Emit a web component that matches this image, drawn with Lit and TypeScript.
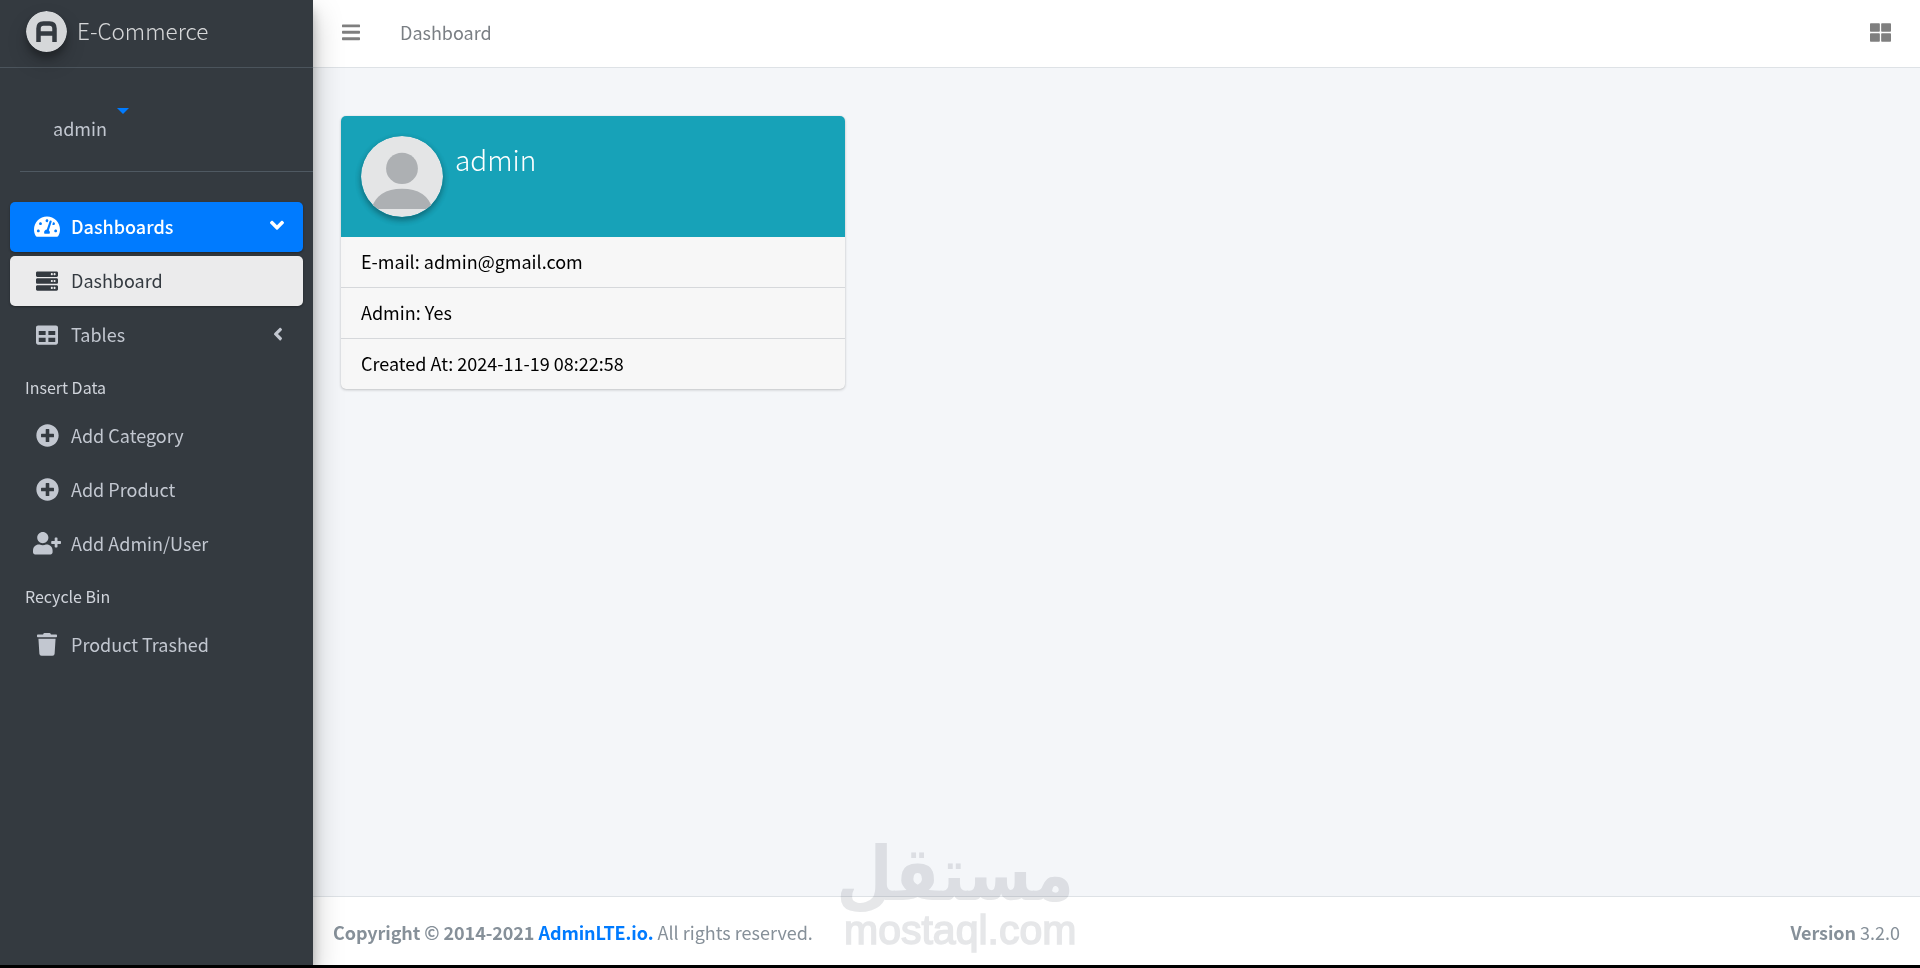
import { LitElement, html, css, svg } from "lit";
import { customElement } from "lit/decorators.js";

const P = {
  gauge: ["0 0 576 512", "M288 32C128.94 32 0 160.94 0 320c0 52.8 14.25 102.26 39.06 144.8 5.61 9.62 16.3 15.2 27.44 15.2h443c11.14 0 21.83-5.58 27.44-15.2C561.75 422.26 576 372.8 576 320c0-159.06-128.94-288-288-288zm0 64c14.71 0 26.58 10.13 30.32 23.65-1.11 2.26-2.64 4.23-3.45 6.67l-9.22 27.67c-5.13 3.49-10.97 6.01-17.64 6.01-17.67 0-32-14.33-32-32S270.33 96 288 96zM96 384c-17.67 0-32-14.33-32-32s14.33-32 32-32 32 14.33 32 32-14.33 32-32 32zm48-160c-17.67 0-32-14.33-32-32s14.33-32 32-32 32 14.33 32 32-14.33 32-32 32zm246.77-72.41l-61.33 184C343.13 347.33 352 364.54 352 384c0 11.72-3.38 22.55-8.88 32H232.88c-5.5-9.45-8.88-20.28-8.88-32 0-33.94 26.5-61.43 59.9-63.59l61.34-184.01c4.17-12.56 17.73-19.45 30.36-15.17 12.57 4.19 19.35 17.77 15.17 30.36zm14.66 57.2l15.52-46.55c3.47-1.29 7.13-2.23 11.05-2.23 17.67 0 32 14.33 32 32s-14.33 32-32 32c-11.38-.01-20.89-6.28-26.57-15.22zM480 384c-17.67 0-32-14.33-32-32s14.33-32 32-32 32 14.33 32 32-14.33 32-32 32z"],
  server: ["0 0 512 512", "M480 160H32c-17.67 0-32-14.33-32-32V64c0-17.67 14.33-32 32-32h448c17.67 0 32 14.33 32 32v64c0 17.67-14.33 32-32 32zm-48-88c-13.25 0-24 10.75-24 24s10.75 24 24 24 24-10.75 24-24-10.75-24-24-24zm-64 0c-13.25 0-24 10.75-24 24s10.75 24 24 24 24-10.75 24-24-10.75-24-24-24zm112 248H32c-17.67 0-32-14.33-32-32v-64c0-17.67 14.33-32 32-32h448c17.67 0 32 14.33 32 32v64c0 17.67-14.33 32-32 32zm-48-88c-13.25 0-24 10.75-24 24s10.75 24 24 24 24-10.75 24-24-10.75-24-24-24zm-64 0c-13.25 0-24 10.75-24 24s10.75 24 24 24 24-10.75 24-24-10.75-24-24-24zm112 248H32c-17.67 0-32-14.33-32-32v-64c0-17.67 14.33-32 32-32h448c17.67 0 32 14.33 32 32v64c0 17.67-14.33 32-32 32zm-48-88c-13.25 0-24 10.75-24 24s10.75 24 24 24 24-10.75 24-24-10.75-24-24-24zm-64 0c-13.25 0-24 10.75-24 24s10.75 24 24 24 24-10.75 24-24-10.75-24-24-24z"],
  table: ["0 0 512 512", "M464 32H48C21.49 32 0 53.49 0 80v352c0 26.51 21.49 48 48 48h416c26.51 0 48-21.49 48-48V80c0-26.51-21.49-48-48-48zM224 416H64v-96h160v96zm0-160H64v-96h160v96zm224 160H288v-96h160v96zm0-160H288v-96h160v96z"],
  plus: ["0 0 512 512", "M256 8C119 8 8 119 8 256s111 248 248 248 248-111 248-248S393 8 256 8zm144 276c0 6.6-5.4 12-12 12h-92v92c0 6.6-5.4 12-12 12h-56c-6.6 0-12-5.4-12-12v-92h-92c-6.6 0-12-5.4-12-12v-56c0-6.6 5.4-12 12-12h92v-92c0-6.6 5.4-12 12-12h56c6.6 0 12 5.4 12 12v92h92c6.6 0 12 5.4 12 12v56z"],
  user: ["0 0 640 512", "M624 208h-64v-64c0-8.8-7.2-16-16-16h-32c-8.8 0-16 7.2-16 16v64h-64c-8.8 0-16 7.2-16 16v32c0 8.8 7.2 16 16 16h64v64c0 8.8 7.2 16 16 16h32c8.8 0 16-7.2 16-16v-64h64c8.8 0 16-7.2 16-16v-32c0-8.8-7.2-16-16-16zm-400 48c70.7 0 128-57.3 128-128S294.7 0 224 0 96 57.3 96 128s57.3 128 128 128zm89.6 32h-16.7c-22.2 10.2-46.9 16-72.9 16s-50.6-5.8-72.9-16h-16.7C60.2 288 0 348.2 0 422.4V464c0 26.5 21.5 48 48 48h352c26.5 0 48-21.5 48-48v-41.6c0-74.2-60.2-134.4-134.4-134.4z"],
  trash: ["0 0 448 512", "M432 32H312l-9.4-18.7A24 24 0 0 0 281.1 0H166.8a23.72 23.72 0 0 0-21.4 13.3L136 32H16A16 16 0 0 0 0 48v32a16 16 0 0 0 16 16h416a16 16 0 0 0 16-16V48a16 16 0 0 0-16-16zM53.2 467a48 48 0 0 0 47.9 45h245.8a48 48 0 0 0 47.9-45L416 128H32z"],
  down: ["0 0 320 512", "M143 352.3L7 216.3c-9.4-9.4-9.4-24.6 0-33.9l22.6-22.6c9.4-9.4 24.6-9.4 33.9 0l96.4 96.4 96.4-96.4c9.4-9.4 24.6-9.4 33.9 0l22.6 22.6c9.4 9.4 9.4 24.6 0 33.9l-136 136c-9.2 9.4-24.4 9.4-33.8 0z"],
  left: ["0 0 256 512", "M31.7 239l136-136c9.4-9.4 24.6-9.4 33.9 0l22.6 22.6c9.4 9.4 9.4 24.6 0 33.9L127.9 256l96.4 96.4c9.4 9.4 9.4 24.6 0 33.9L201.7 413c-9.4 9.4-24.6 9.4-33.9 0l-136-136c-9.5-9.4-9.5-24.6-.1-34z"],
  bars: ["0 0 448 512", "M16 132h416c8.8 0 16-7.2 16-16V76c0-8.8-7.2-16-16-16H16C7.2 60 0 67.2 0 76v40c0 8.8 7.2 16 16 16zm0 160h416c8.8 0 16-7.2 16-16v-40c0-8.8-7.2-16-16-16H16c-8.800 0-16 7.200-16 16v40c0 8.800 7.200 16 16 16zm0 160h416c8.800 0 16-7.200 16-16v-40c0-8.800-7.200-16-16-16H16c-8.800 0-16 7.200-16 16v40c0 8.800 7.200 16 16 16z"],
  grid: ["0 0 512 512", "M24 32h192c13.300 0 24 10.700 24 24v160c0 13.300-10.700 24-24 24H24c-13.300 0-24-10.700-24-24V56c0-13.300 10.700-24 24-24zm272 0h192c13.300 0 24 10.700 24 24v160c0 13.300-10.700 24-24 24H296c-13.300 0-24-10.700-24-24V56c0-13.300 10.700-24 24-24zM24 272h192c13.300 0 24 10.700 24 24v160c0 13.300-10.700 24-24 24H24c-13.300 0-24-10.700-24-24V296c0-13.300 10.700-24 24-24zm272 0h192c13.300 0 24 10.700 24 24v160c0 13.300-10.700 24-24 24H296c-13.300 0-24-10.700-24-24V296c0-13.300 10.700-24 24-24z"],
};

function icon(name: keyof typeof P, width: number) {
  const [vb, d] = P[name];
  return html`<svg class="ico" style="width:${width}px" viewBox=${vb} fill="currentColor" aria-hidden="true">${svg`<path d=${d}></path>`}</svg>`;
}

@customElement("app-root")
export class AppRoot extends LitElement {
  static styles = css`
    :host {
      display: block;
      height: 968px;
      overflow: hidden;
      background: #000;
      font-family: "Noto Sans CJK JP", "Noto Sans", sans-serif;
      font-size: 18px;
      color: #000;
      position: relative;
    }
    * { box-sizing: border-box; }
    .ico { display: block; height: auto; flex: none; }
    .shell { display: flex; height: 965px; overflow: hidden; }

    .sidebar {
      width: 313px;
      flex: none;
      background: #343a40;
      position: relative;
      z-index: 2;
      box-shadow: 0 14px 28px rgba(0, 0, 0, .25), 0 10px 10px rgba(0, 0, 0, .22);
      color: #c2c7d0;
    }
    .brand {
      height: 68px;
      display: flex;
      align-items: center;
      gap: 10px;
      padding: 0 0 5px 26px;
      border-bottom: 1px solid #4b545c;
      color: rgba(255, 255, 255, .8);
      font-size: 22.500px;
      font-weight: 300;
      line-height: 34px;
    }
    .brand span { padding-bottom: 2px; }
    .logo {
      width: 41px;
      height: 41px;
      flex: none;
      border-radius: 50%;
      box-shadow: 0 10px 20px rgba(0, 0, 0, .19), 0 6px 6px rgba(0, 0, 0, .23);
    }
    .panel {
      margin-left: 20px;
      height: 104px;
      border-bottom: 1px solid #4f5962;
      position: relative;
      padding: 46px 0 0 33px;
      line-height: 28px;
      color: #c2c7d0;
    }
    .caret {
      position: absolute;
      left: 97px;
      top: 40px;
      border-style: solid;
      border-width: 6px 6px 0;
      border-color: #007bff transparent transparent;
    }
    nav { padding: 30px 10px 0; display: flex; flex-direction: column; }
    .link {
      height: 50px;
      margin-bottom: 4px;
      padding: 0 0 2px 21px;
      display: flex;
      align-items: center;
      border-radius: 5px;
      line-height: 28px;
      color: #c2c7d0;
      position: relative;
    }
    .iconbox { width: 32px; margin-right: 8px; display: flex; justify-content: center; flex: none; margin-top: 1px; }
    .link.active { background: #007bff; color: #fff; font-weight: 500; box-shadow: 0 1px 3px rgba(0, 0, 0, .12), 0 1px 2px rgba(0, 0, 0, .24); }
    .link.sub { background: rgba(255, 255, 255, .9); color: #343a40; box-shadow: 0 1px 3px rgba(0, 0, 0, .12), 0 1px 2px rgba(0, 0, 0, .24); }
    .arrow { margin-left: auto; margin-right: 19px; display: flex; margin-top: -1px; }
    .arrow.narrow { margin-right: 20px; }
    .head {
      height: 47px;
      display: flex;
      align-items: center;
      padding: 0 0 2px 15px;
      font-size: 16px;
      line-height: 24px;
      color: #d0d4db;
    }

    main { flex: 1; min-width: 0; display: flex; flex-direction: column; background: #f4f6f9; }
    .top {
      height: 68px;
      flex: none;
      background: #fff;
      border-bottom: 1px solid #dee2e6;
      display: flex;
      align-items: center;
      padding: 0 29px 3px 29px;
      color: rgba(0, 0, 0, .5);
      line-height: 28px;
    }
    .top .crumb { margin-left: 40px; padding-bottom: 1px; color: #7a7f84; }
    .top .right { margin-left: auto; }
    .content { flex: 1; padding: 48px 28px; }
    .card {
      width: 504px;
      border-radius: 5px;
      overflow: hidden;
      background: #f7f7f7;
      box-shadow: 0 0 1px rgba(0, 0, 0, .125), 0 1px 3px rgba(0, 0, 0, .2);
    }
    .card-head {
      height: 121px;
      background: #17a2b8;
      display: flex;
      padding: 20px 0 0 20px;
      gap: 12px;
      color: #fff;
    }
    .avatar {
      width: 82px;
      height: 81px;
      border-radius: 50%;
      flex: none;
      box-shadow: 0 3px 6px rgba(0, 0, 0, .16), 0 3px 6px rgba(0, 0, 0, .23);
    }
    .name { font-size: 28px; font-weight: 300; line-height: 40px; margin-top: 3px; }
    .row {
      height: 51px;
      padding: 0 20px 2px;
      display: flex;
      align-items: center;
      border-bottom: 1px solid #d6d8db;
      line-height: 28px;
    }
    .row:last-child { border-bottom: 0; height: 50px; }

    footer {
      height: 69px;
      flex: none;
      background: #fff;
      border-top: 1px solid #dee2e6;
      display: flex;
      justify-content: space-between;
      align-items: center;
      padding: 1px 20px 0;
      color: #869099;
      line-height: 28px;
    }
    footer b { font-weight: 700; letter-spacing: -.08px; }
    footer a { color: #007bff; font-weight: 700; text-decoration: none; }

    .mark {
      position: absolute;
      left: 844px;
      top: 840px;
      width: 230px;
      z-index: 3;
      color: #e6e7e9;
      mix-blend-mode: multiply;
      text-align: center;
      pointer-events: none;
    }
    .mark .ar {
      font-family: "DejaVu Sans", sans-serif;
      font-weight: 700;
      font-size: 65px;
      line-height: 70px;
      direction: rtl;
      margin-left: 7px;
      transform: scaleY(1.15);
    }
    .mark .lat {
      font-family: "Liberation Sans", sans-serif;
      font-weight: 400;
      font-size: 41px;
      line-height: 36px;
      margin-top: 2px;
      white-space: nowrap;
      -webkit-text-stroke: 1.5px #e6e7e9;
    }
  `;

  render() {
    return html`
      <div class="shell">
        <aside class="sidebar">
          <div class="brand">
            <svg class="logo" viewBox="0 0 41 41" aria-hidden="true">
              <circle cx="20.500" cy="20.500" r="20.500" fill="#d5d7d9"></circle>
              <path d="M12.500 31V17.500Q12.500 12.500 17.500 12.500H23.500Q28.500 12.500 28.500 17.500V31M12.500 22.500H28.500" fill="none" stroke="#343a40" stroke-width="4.500"></path>
            </svg>
            <span>E-Commerce</span>
          </div>
          <div class="panel">admin<span class="caret"></span></div>
          <nav>
            <div class="link active">
              <span class="iconbox">${icon("gauge", 26)}</span>Dashboards
              <span class="arrow">${icon("down", 14)}</span>
            </div>
            <div class="link sub"><span class="iconbox">${icon("server", 22)}</span>Dashboard</div>
            <div class="link">
              <span class="iconbox">${icon("table", 22)}</span>Tables
              <span class="arrow narrow">${icon("left", 10)}</span>
            </div>
            <div class="head">Insert Data</div>
            <div class="link"><span class="iconbox">${icon("plus", 23)}</span>Add Category</div>
            <div class="link"><span class="iconbox">${icon("plus", 23)}</span>Add Product</div>
            <div class="link"><span class="iconbox">${icon("user", 28)}</span>Add Admin/User</div>
            <div class="head">Recycle Bin</div>
            <div class="link"><span class="iconbox">${icon("trash", 20)}</span>Product Trashed</div>
          </nav>
        </aside>
        <main>
          <header class="top">
            ${icon("bars", 18)}
            <span class="crumb">Dashboard</span>
            <span class="right">${icon("grid", 21)}</span>
          </header>
          <section class="content">
            <div class="card">
              <div class="card-head">
                <svg class="avatar" viewBox="0 0 80 80" preserveAspectRatio="none" aria-hidden="true">
                  <circle cx="40" cy="40" r="40" fill="#e4e5e6"></circle>
                  <circle cx="40" cy="32" r="15.500" fill="#adb0b3"></circle>
                  <path d="M10 72Q16 52 40 52Q64 52 70 72Z" fill="#adb0b3"></path>
                </svg>
                <div class="name">admin</div>
              </div>
              <div class="row">E-mail: admin@gmail.com</div>
              <div class="row">Admin: Yes</div>
              <div class="row">Created At: 2024-11-19 08:22:58</div>
            </div>
          </section>
          <footer>
            <span><b>Copyright © 2014-2021 <a>AdminLTE.io.</a></b> All rights reserved.</span>
            <span><b>Version</b> 3.2.0</span>
          </footer>
        </main>
      </div>
      <div class="mark">
        <div class="ar">مستقل</div>
        <div class="lat">mostaql.com</div>
      </div>
    `;
  }
}
